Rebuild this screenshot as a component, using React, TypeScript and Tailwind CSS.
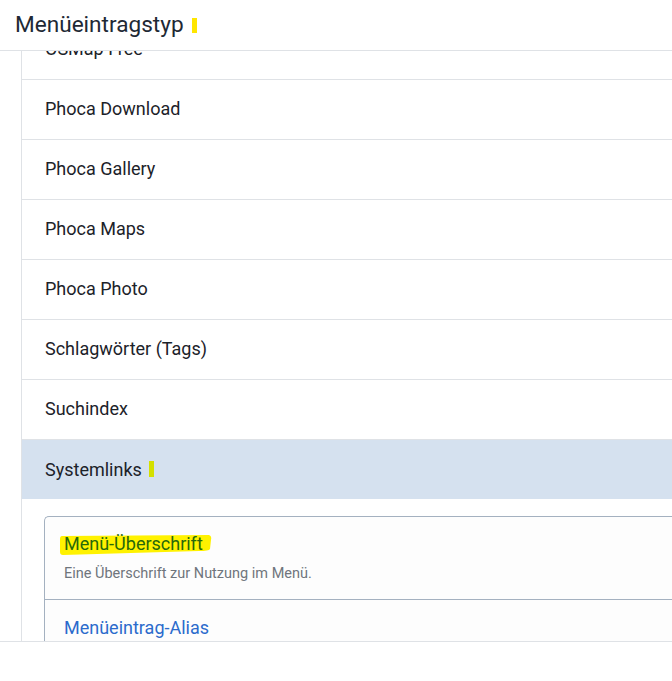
import React from "react";

const rows = [
  "OSMap Free",
  "Phoca Download",
  "Phoca Gallery",
  "Phoca Maps",
  "Phoca Photo",
  "Schlagwörter (Tags)",
  "Suchindex",
];

export default function App() {
  return (
    <div
      className="w-[672px] h-[681px] bg-white flex flex-col overflow-hidden"
      style={{ fontFamily: "Roboto, 'Noto Sans', sans-serif" }}
    >
      <div className="h-[51px] shrink-0 border-b border-[#dfe2e6] flex items-center pl-[15px] relative z-10 bg-white">
        <span className="text-[22.6px] text-[#1e2935] leading-none">Menüeintragstyp</span>
        <span className="ml-[8px] w-[5px] h-[15px] bg-[#ffe600]" />
      </div>
      <div className="flex-1 min-h-0 overflow-hidden ml-[21px] border-l border-[#dfe2e6]">
        <div className="-mt-[31px]">
          {rows.map((r) => (
            <div
              key={r}
              className="h-[60px] border-b border-[#dfe2e6] flex items-center pl-[23px] pb-[2px] text-[18px] text-[#1c2229]"
            >
              {r}
            </div>
          ))}
          <div className="h-[59px] bg-[#d5e1ef] flex items-center pl-[23px] pb-[1px] text-[18px] text-[#1c2229]">
            <span>Systemlinks</span>
            <span className="ml-[7px] w-[5px] h-[16px] bg-[#d4e000]" />
          </div>
          <div className="pt-[17px] pl-[22px]">
            <div className="border border-r-0 border-[#a4b1c0] rounded-tl-[5px] bg-[#fdfdfd]">
              <div className="h-[83px] border-b border-[#a4b1c0] pl-[19px] pt-[15px]">
                <div className="relative inline-block">
                  <svg
                    className="absolute left-[-5px] top-[2px]"
                    width="154"
                    height="22"
                    viewBox="0 0 154 22"
                  >
                    <path
                      d="M3 2 L150 1 Q153 2 152 6 L151 15 Q150 17 140 17 L4 21 Q1 21 1 18 L1 5 Q1 2 3 2 Z"
                      fill="#fff200"
                    />
                  </svg>
                  <span className="relative text-[18px] text-[#27690a] leading-[24px]">
                    Menü-Überschrift
                  </span>
                </div>
                <div className="mt-[10px] text-[14.5px] text-[#6f757c] leading-none">
                  Eine Überschrift zur Nutzung im Menü.
                </div>
              </div>
              <div className="h-[60px] pl-[19px] pt-[14px]">
                <span className="text-[18px] text-[#2b6bcc]">Menüeintrag-Alias</span>
              </div>
            </div>
          </div>
        </div>
      </div>
      <div className="h-[40px] shrink-0 border-t border-[#dfe2e6] bg-white" />
    </div>
  );
}
